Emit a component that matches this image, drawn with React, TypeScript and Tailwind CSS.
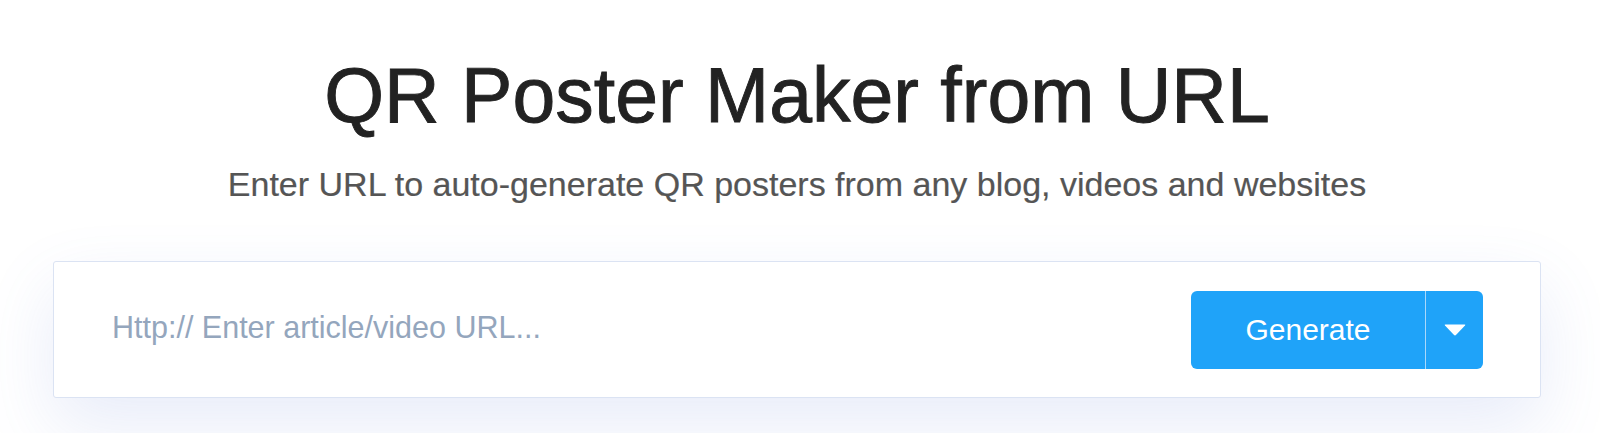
import { useState } from 'react'

function CaretDown() {
  return (
    <svg width="22" height="12" viewBox="0 0 22 12" aria-hidden="true">
      <path d="M1.5 0.5 H20.5 Q22 0.5 21 1.6 L12.2 10.8 Q11 12 9.8 10.8 L1 1.6 Q0 0.5 1.5 0.5 Z" fill="#ffffff" />
    </svg>
  )
}

export default function App() {
  const [url, setUrl] = useState('')

  return (
    <div
      className="h-[433px] w-full overflow-hidden bg-white"
      style={{ fontFamily: '"Liberation Sans", Arial, Helvetica, sans-serif' }}
    >
      <div className="w-[1594px] flex flex-col items-center">
        <h1 className="pt-[57px] text-[77px] leading-none text-[#222222] font-normal [-webkit-text-stroke:0.9px_#222222]">
          QR Poster Maker from URL
        </h1>
        <p className="mt-[33px] text-[34px] leading-none text-[#555555] [-webkit-text-stroke:0.2px_#555555]">
          Enter URL to auto-generate QR posters from any blog, videos and websites
        </p>

        {/* search card */}
        <div className="mt-[60px] w-[1488px] h-[137px] flex items-center justify-between bg-white border border-[#dbe3f3] rounded-[3px] pl-[58px] pr-[57px] shadow-[0_28px_70px_rgba(90,120,210,0.14)]">
          <input
            value={url}
            onChange={(e) => setUrl(e.target.value)}
            placeholder="Http:// Enter article/video URL..."
            className="flex-1 bg-transparent outline-none text-[30.5px] pb-[3px] text-[#333] placeholder:text-[#94a6bd]"
          />
          <div className="flex h-[78px] rounded-[6px] overflow-hidden bg-[#1fa3f9]">
            <button className="w-[234px] h-full text-white text-[30px] leading-none">Generate</button>
            <div className="w-px h-full bg-[#a9d8fb]" />
            <button className="w-[57px] h-full flex items-center justify-center">
              <CaretDown />
            </button>
          </div>
        </div>
      </div>
    </div>
  )
}
